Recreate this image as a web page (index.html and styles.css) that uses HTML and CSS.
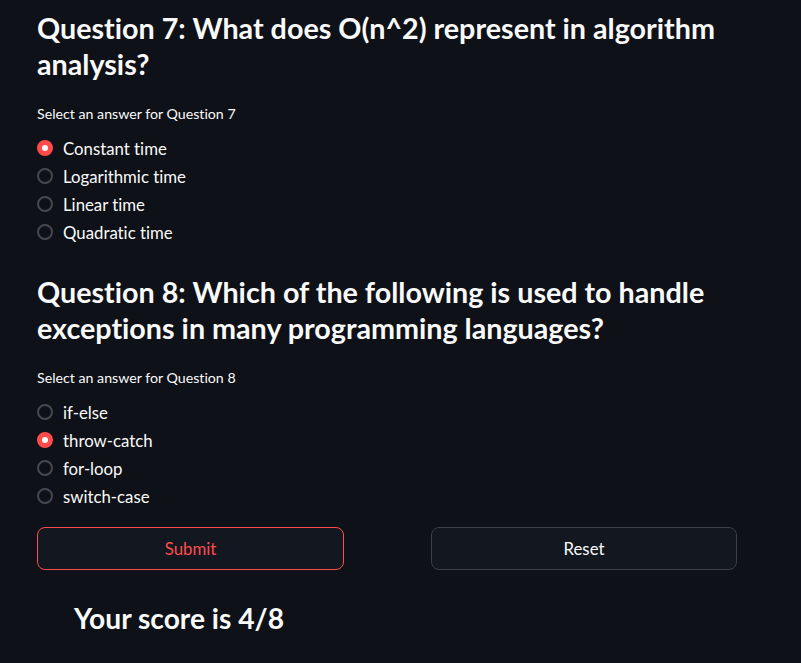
FILE: index.html
```html
<!DOCTYPE html>
<html>
<head>
<meta charset="utf-8">
<link rel="stylesheet" href="styles.css">
</head>
<body>
<main class="page">
  <section class="question">
    <h2 class="q-title">Question 7: What does O(n^2) represent in algorithm analysis?</h2>
    <div class="q-label">Select an answer for Question 7</div>
    <div class="options">
      <div class="opt"><span class="radio on"></span><span>Constant time</span></div>
      <div class="opt"><span class="radio"></span><span>Logarithmic time</span></div>
      <div class="opt"><span class="radio"></span><span>Linear time</span></div>
      <div class="opt"><span class="radio"></span><span>Quadratic time</span></div>
    </div>
  </section>
  <section class="question">
    <h2 class="q-title">Question 8: Which of the following is used to handle exceptions in many programming languages?</h2>
    <div class="q-label">Select an answer for Question 8</div>
    <div class="options">
      <div class="opt"><span class="radio"></span><span>if-else</span></div>
      <div class="opt"><span class="radio on"></span><span>throw-catch</span></div>
      <div class="opt"><span class="radio"></span><span>for-loop</span></div>
      <div class="opt"><span class="radio"></span><span>switch-case</span></div>
    </div>
  </section>
  <div class="buttons">
    <button class="btn primary">Submit</button>
    <button class="btn">Reset</button>
  </div>
  <h3 class="score">Your score is 4/8</h3>
</main>
</body>
</html>
```
FILE: styles.css
```css
html, body {
  margin: 0;
  background: #0e1117;
  color: #fafafa;
  font-family: "Lato", "Open Sans", sans-serif;
  font-variant-ligatures: none;
}
.page {
  padding: 10px 64px 0 37px;
  display: flex;
  flex-direction: column;
}
.question {
  display: flex;
  flex-direction: column;
}
.q-title {
  margin: 0;
  font-size: 28.7px;
  line-height: 36px;
  font-weight: 700;
}
.q-label {
  margin-top: 22px;
  font-size: 14.2px;
  line-height: 20px;
}
.options {
  margin-top: 10px;
  display: flex;
  flex-direction: column;
}
.opt {
  height: 28px;
  display: flex;
  align-items: center;
  gap: 10px;
  font-size: 16.8px;
}
.radio {
  width: 16px;
  height: 16px;
  box-sizing: border-box;
  border-radius: 50%;
  border: 2px solid #45484f;
  flex: none;
  display: flex;
  align-items: center;
  justify-content: center;
}
.radio.on {
  background: #ff4b4b;
  border-color: #ff4b4b;
}
.radio.on::after {
  content: "";
  width: 6px;
  height: 6px;
  border-radius: 50%;
  background: #fafafa;
}
.question + .question {
  margin-top: 28px;
}
.buttons {
  margin-top: 17px;
  display: grid;
  grid-template-columns: 307px 306px;
  column-gap: 87px;
}
.btn {
  height: 43px;
  background: #13171f;
  border: 1px solid #3c3f46;
  border-radius: 8px;
  color: #fafafa;
  font-family: inherit;
  font-size: 16.8px;
}
.btn.primary {
  border-color: #ff4b4b;
  color: #ff4b4b;
}
.score {
  margin: 30px 0 0 37px;
  font-size: 28.2px;
  line-height: 36px;
  font-weight: 700;
}
```
